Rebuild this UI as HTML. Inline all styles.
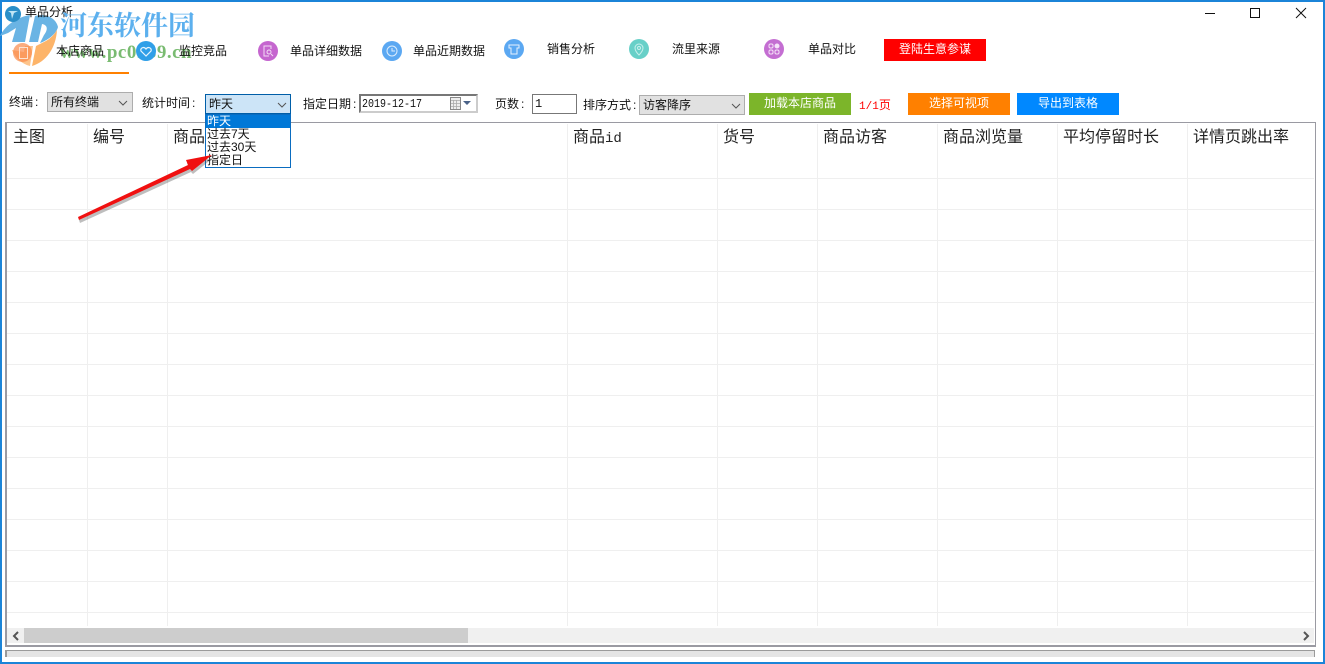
<!DOCTYPE html>
<html lang="zh">
<head>
<meta charset="utf-8">
<style>
html,body{margin:0;padding:0;width:1325px;height:664px;overflow:hidden;background:#fff}
body{position:relative;font-family:"Liberation Sans","WenQuanYi Zen Hei","Noto Sans CJK SC",sans-serif;font-size:12px;color:#111}
.a{position:absolute;white-space:nowrap}
.t{line-height:16px;height:16px}
.c{margin-left:2px}
.h{font-size:16px;line-height:20px;top:128px;color:#222}
.vl{position:absolute;width:1px;background:#efefef}
.hl{position:absolute;height:1px;background:#efefef;left:7px;width:1307px}
.btn{position:absolute;color:#fff;text-align:center;height:22px;line-height:21px;width:102px;font-size:12px}
.sel{position:absolute;box-sizing:border-box;background:#e1e1e1;border:1px solid #adadad;height:20px;line-height:18px;padding-left:3px}
.ic{position:absolute;width:20px;height:20px;border-radius:50%}
</style>
</head>
<body>
<!-- window border -->
<div class="a" style="left:0;top:0;width:1325px;height:2px;background:#1b84d8"></div>
<div class="a" style="left:0;top:0;width:2px;height:664px;background:#1b84d8"></div>
<div class="a" style="left:1323px;top:0;width:2px;height:664px;background:#1b84d8"></div>
<div class="a" style="left:0;top:662px;width:1325px;height:2px;background:#1b84d8"></div>

<!-- watermark logo -->
<svg class="a" style="left:0;top:0" width="60" height="74" viewBox="0 0 60 74">
<path d="M0 36C6 24 18 17 30 15L25 42H12L16 28L8 33Z" fill="#6ab4e4"/>
<path d="M29 42L35 16C46 13 56 18 58 27C56 35 46 41 40 43L44 35C48 30 48 25 42 24L38 42Z" fill="#6ab4e4"/>
<path d="M57 30C56 48 46 62 32 66L36 46L44 42C50 39 54 35 57 30Z" fill="#fdb469"/>
<path d="M12 50C15 58 22 64 30 66L33 46H25L24 52Z" fill="#fdc48c"/>
</svg>
<!-- title -->
<svg class="a" style="left:3px;top:4px" width="20" height="20" viewBox="0 0 20 20"><circle cx="10" cy="10" r="8" fill="#2b8fc8"/><path d="M5 7h10l-4 2-2 6-1-6z" fill="#bfe6f5"/></svg>
<div class="a t" style="left:25px;top:4px">单品分析</div>
<div class="a" style="left:60px;top:6px;font:bold 27px/36px 'Noto Serif CJK SC',serif;color:#5cb0ee">河东软件园</div>
<div class="a" style="left:60px;top:42px;font:bold 19px/22px 'Liberation Serif',serif;color:#58ab4e;opacity:.8;letter-spacing:.5px">www.pc0359.cn</div>

<!-- tab icons -->
<div class="ic" style="left:13px;top:43px;width:19px;height:19px;background:#f98a4a;opacity:.7"></div>
<div class="a" style="left:19px;top:47px;width:7px;height:10px;border:1px solid #fde3d0"></div>
<div class="ic" style="left:136px;top:41px;background:#2f9fe8"></div>
<svg class="a" style="left:140px;top:46px" width="12" height="11" viewBox="0 0 12 11"><path d="M6 10L1 5c-1-3 3-5 5-2 2-3 6-1 5 2z" fill="none" stroke="#e6f4fd" stroke-width="1.2"/></svg>
<div class="ic" style="left:258px;top:41px;background:#c566cf"></div>
<svg class="a" style="left:262px;top:45px" width="12" height="12" viewBox="0 0 12 12"><path d="M9 4V1H2v10h5" fill="none" stroke="#f3dcf5"/><circle cx="7" cy="7" r="2" fill="none" stroke="#f3dcf5"/><path d="M9 9l2 2" stroke="#f3dcf5"/></svg>
<div class="ic" style="left:382px;top:41px;background:#5ba8f2"></div>
<svg class="a" style="left:385px;top:44px" width="14" height="14" viewBox="0 0 14 14"><circle cx="7" cy="7" r="5" fill="none" stroke="#dcedfd"/><path d="M7 4v3h3" fill="none" stroke="#dcedfd"/></svg>
<div class="ic" style="left:504px;top:39px;background:#5ba8f2"></div>
<svg class="a" style="left:508px;top:44px" width="12" height="11" viewBox="0 0 12 11"><path d="M1 1h10v3H9v6H3V4H1z" fill="none" stroke="#e4f1fe"/></svg>
<div class="ic" style="left:629px;top:39px;background:#68d0c8"></div>
<svg class="a" style="left:633px;top:43px" width="12" height="13" viewBox="0 0 12 13"><path d="M6 12C3 9 2 7 2 5a4 4 0 0 1 8 0c0 2-1 4-4 7z" fill="none" stroke="#c8f0ec"/><circle cx="6" cy="5" r="1.5" fill="none" stroke="#c8f0ec"/></svg>
<div class="ic" style="left:764px;top:39px;background:#c46ed2"></div>
<svg class="a" style="left:768px;top:43px" width="12" height="12" viewBox="0 0 12 12" fill="none" stroke="#f5e2f8"><rect x="1" y="1" width="4" height="4" rx="1.5"/><rect x="7" y="1" width="4" height="4" rx="2" fill="#f5e2f8"/><rect x="1" y="7" width="4" height="4" rx="1.5"/><rect x="7" y="7" width="4" height="4" rx="1.5"/></svg>

<!-- tabs -->
<div class="a t" style="left:56px;top:43px">本店商品</div>
<div class="a t" style="left:179px;top:43px">监控竞品</div>
<div class="a t" style="left:290px;top:43px">单品详细数据</div>
<div class="a t" style="left:413px;top:43px">单品近期数据</div>
<div class="a t" style="left:547px;top:41px">销售分析</div>
<div class="a t" style="left:672px;top:41px">流里来源</div>
<div class="a t" style="left:808px;top:41px">单品对比</div>
<div class="a" style="left:9px;top:72px;width:120px;height:2px;background:#ff8000"></div>
<div class="btn" style="left:884px;top:39px;background:#ff0000">登陆生意参谋</div>

<!-- window buttons -->
<svg class="a" style="left:1200px;top:0" width="125" height="26" viewBox="0 0 125 26" fill="none" stroke="#111">
<path d="M5 13.5h10" stroke-width="1"/>
<rect x="50.5" y="8.5" width="9" height="9" stroke-width="1"/>
<path d="M96 8l10 10M106 8L96 18" stroke-width="1"/>
</svg>

<!-- toolbar -->
<div class="a t" style="left:9px;top:94px">终端<span class="c">:</span></div>
<div class="sel" style="left:47px;top:92px;width:86px">所有终端</div>
<svg class="a" style="left:118px;top:100px" width="10" height="6" viewBox="0 0 10 6"><path d="M1 1l4 4 4-4" fill="none" stroke="#555"/></svg>
<div class="a t" style="left:142px;top:95px">统计时间<span class="c">:</span></div>
<div class="sel" style="left:205px;top:94px;width:86px;background:#cce4f7;border-color:#005ea8;height:20px">昨天</div>
<svg class="a" style="left:277px;top:102px" width="10" height="6" viewBox="0 0 10 6"><path d="M1 1l4 4 4-4" fill="none" stroke="#555"/></svg>

<div class="a t" style="left:303px;top:96px">指定日期<span class="c">:</span></div>
<div class="a" style="left:359px;top:94px;width:119px;height:19px;box-sizing:border-box;border:2px solid #777;border-right-color:#ccc;border-bottom-color:#ccc;background:#fff"></div>
<div class="a" style="left:362px;top:96px;font:10px/16px 'Liberation Mono',monospace;transform:scale(1,1.2);transform-origin:left top">2019-12-17</div>
<svg class="a" style="left:449px;top:97px" width="25" height="14" viewBox="0 0 25 14"><rect x="1.500" y="0.500" width="10" height="12" fill="#eee" stroke="#888"/><path d="M2 3.500h9M2 6.500h9M2 9.500h9M4.500 3v9M7.500 3v9" stroke="#aaa" stroke-width=".8"/><path d="M14 4h8l-4 4z" fill="#4a6288"/></svg>

<div class="a t" style="left:495px;top:96px">页数<span class="c">:</span></div>
<div class="a" style="left:532px;top:94px;width:45px;height:20px;box-sizing:border-box;border:1px solid #777;line-height:19px;padding-left:2px;font-family:'Liberation Mono',monospace">1</div>
<div class="a t" style="left:583px;top:97px">排序方式<span class="c">:</span></div>
<div class="sel" style="left:639px;top:95px;width:106px;height:20px">访客降序</div>
<svg class="a" style="left:731px;top:103px" width="10" height="6" viewBox="0 0 10 6"><path d="M1 1l4 4 4-4" fill="none" stroke="#555"/></svg>
<div class="btn" style="left:749px;top:93px;background:#7cb52a">加载本店商品</div>
<div class="a t" style="left:859px;top:97px;color:#f00"><span style="font-family:'Liberation Mono',monospace;font-size:11px">1/1</span>页</div>
<div class="btn" style="left:908px;top:93px;background:#ff8000">选择可视项</div>
<div class="btn" style="left:1017px;top:93px;background:#0088ff">导出到表格</div>

<!-- grid -->
<div class="a" style="left:5px;top:122px;width:1311px;height:525px;box-sizing:border-box;border:solid #9a9aa2;border-width:1px 1px 2px 2px"></div>
<div class="vl" style="left:87px;top:124px;height:502px"></div>
<div class="vl" style="left:167px;top:124px;height:502px"></div>
<div class="vl" style="left:567px;top:124px;height:502px"></div>
<div class="vl" style="left:717px;top:124px;height:502px"></div>
<div class="vl" style="left:817px;top:124px;height:502px"></div>
<div class="vl" style="left:937px;top:124px;height:502px"></div>
<div class="vl" style="left:1057px;top:124px;height:502px"></div>
<div class="vl" style="left:1187px;top:124px;height:502px"></div>
<div class="hl" style="top:178px"></div><div class="hl" style="top:209px"></div><div class="hl" style="top:240px"></div>
<div class="hl" style="top:271px"></div><div class="hl" style="top:302px"></div><div class="hl" style="top:333px"></div>
<div class="hl" style="top:364px"></div><div class="hl" style="top:395px"></div><div class="hl" style="top:426px"></div>
<div class="hl" style="top:457px"></div><div class="hl" style="top:488px"></div><div class="hl" style="top:519px"></div>
<div class="hl" style="top:550px"></div><div class="hl" style="top:581px"></div><div class="hl" style="top:612px"></div>

<div class="a h" style="left:13px">主图</div>
<div class="a h" style="left:93px">编号</div>
<div class="a h" style="left:173px">商品</div>
<div class="a h" style="left:573px">商品<span style="font-family:'Liberation Mono',monospace;font-size:14px">id</span></div>
<div class="a h" style="left:723px">货号</div>
<div class="a h" style="left:823px">商品访客</div>
<div class="a h" style="left:943px">商品浏览量</div>
<div class="a h" style="left:1063px">平均停留时长</div>
<div class="a h" style="left:1193px">详情页跳出率</div>

<!-- scrollbar -->
<div class="a" style="left:7px;top:628px;width:1307px;height:15px;background:#f0f0f0"></div>
<div class="a" style="left:24px;top:628px;width:444px;height:15px;background:#cdcdcd"></div>
<svg class="a" style="left:11px;top:631px" width="10" height="10" viewBox="0 0 10 10"><path d="M7 1L3 5l4 4" fill="none" stroke="#555" stroke-width="2"/></svg>
<svg class="a" style="left:1301px;top:631px" width="10" height="10" viewBox="0 0 10 10"><path d="M3 1l4 4-4 4" fill="none" stroke="#555" stroke-width="2"/></svg>

<!-- status bar -->
<div class="a" style="left:5px;top:650px;width:1310px;height:7px;box-sizing:border-box;background:#e4e4e4;border:solid #9a9a9a;border-width:1px 1px 0 2px"></div>

<!-- dropdown -->
<div class="a" style="left:205px;top:114px;width:86px;height:54px;box-sizing:border-box;background:#fff;border:1px solid #0a6cc0;line-height:13px;overflow:hidden">
<div style="background:#0078d7;color:#fff;height:13px;padding-left:1px">昨天</div>
<div style="height:13px;padding-left:1px">过去7天</div>
<div style="height:13px;padding-left:1px">过去30天</div>
<div style="height:13px;padding-left:1px">指定日</div>
</div>

<!-- arrow -->
<svg class="a" style="left:70px;top:150px" width="150" height="80" viewBox="0 0 150 80">
<path d="M8 67L118 15L116 10L142 5L122 21L120 19L9 70Z" fill="#444" opacity=".35" transform="translate(1 3)"/>
<path d="M8 67L118 15L116 10L142 5L122 21L120 19L9 70Z" fill="#f01010"/>
</svg>
</body>
</html>
